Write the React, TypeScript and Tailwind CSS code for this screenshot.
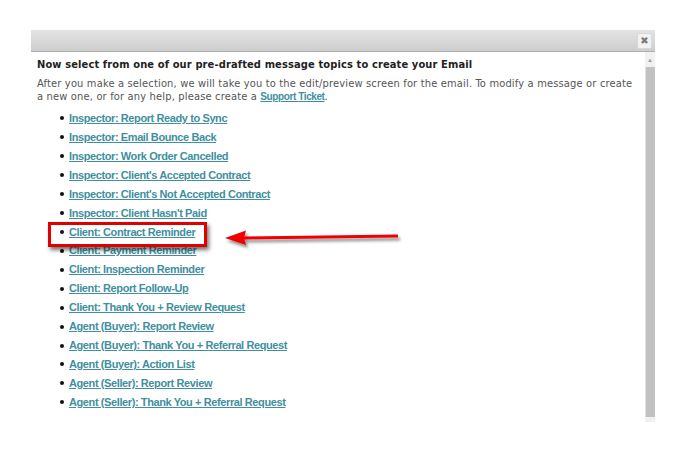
import React from "react";

const items = [
  "Inspector: Report Ready to Sync",
  "Inspector: Email Bounce Back",
  "Inspector: Work Order Cancelled",
  "Inspector: Client's Accepted Contract",
  "Inspector: Client's Not Accepted Contract",
  "Inspector: Client Hasn't Paid",
  "Client: Contract Reminder",
  "Client: Payment Reminder",
  "Client: Inspection Reminder",
  "Client: Report Follow-Up",
  "Client: Thank You + Review Request",
  "Agent (Buyer): Report Review",
  "Agent (Buyer): Thank You + Referral Request",
  "Agent (Buyer): Action List",
  "Agent (Seller): Report Review",
  "Agent (Seller): Thank You + Referral Request",
];

export default function App() {
  return (
    <div className="relative w-[684px] h-[450px] bg-white pt-[30px] pl-[31px] overflow-hidden">
      <div className="w-[624px] flex flex-col">
        <div className="h-[22px] flex items-center justify-end pr-[3px] bg-gradient-to-b from-[#e4e4e4] to-[#cdcdcd] border-b border-[#b0b0b0]">
          <div className="w-[15px] h-[16px] bg-[#f2f2f2] border border-[#d8d8d8] rounded-[2px] flex items-center justify-center text-[10px] text-[#7a7a7a] leading-none font-['DejaVu_Sans',sans-serif]">
            ✖
          </div>
        </div>
        <div className="flex h-[370px]">
          <div className="flex-1 pl-[6px] pt-[4px] font-['DejaVu_Sans_Condensed','DejaVu_Sans',sans-serif]">
            <div className="text-[11px] font-bold text-[#222] leading-[18px] tracking-[0.13px] whitespace-nowrap">
              Now select from one of our pre-drafted message topics to create your Email
            </div>
            <div className="text-[11px] text-[#555] leading-[12.5px] mt-[4px] tracking-[0.17px] whitespace-nowrap">
              After you make a selection, we will take you to the edit/preview screen for the email. To modify a message or create
              <br />
              a new one, or for any help, please create a{" "}
              <span className="font-['Liberation_Sans',sans-serif] font-bold text-[10px] underline text-[#3f8fa0] tracking-[-0.4px]">
                Support Ticket
              </span>
              .
            </div>
            <ul className="mt-[6px] pl-[23px] font-['Liberation_Sans',sans-serif] text-[11px] font-bold leading-[18.93px]">
              {items.map((t) => (
                <li key={t} className="flex items-center h-[18.93px]">
                  <span className="w-[4px] h-[4px] rounded-full bg-[#111] mr-[5px] shrink-0"></span>
                  <span className="underline text-[#3f8fa0] tracking-[-0.4px] whitespace-nowrap">{t}</span>
                </li>
              ))}
            </ul>
          </div>
          <div className="w-[10px] flex flex-col bg-[#f1f1f1]">
            <div className="h-[15px] flex items-center justify-center text-[6px] text-[#999] leading-none">▲</div>
            <div className="flex-1 bg-[#c1c1c1] border-l border-[#e0e0e0] mb-[5px]"></div>
          </div>
        </div>
      </div>

      <div className="absolute left-[48px] top-[222px] w-[159px] h-[25px] border-[3px] border-[#e00000] shadow-[2px_3px_4px_rgba(0,0,0,0.55)]"></div>
      <svg className="absolute left-[220px] top-[226px]" width="190" height="24" viewBox="0 0 190 24">
        <defs>
          <filter id="sh" x="-10%" y="-50%" width="120%" height="200%">
            <feDropShadow dx="2" dy="3" stdDeviation="1.5" floodColor="#000" floodOpacity="0.45" />
          </filter>
        </defs>
        <g filter="url(#sh)">
          <path d="M23 10.5 L178 8.5 L178 11.5 L23 13.5 Z" fill="#f00000" />
          <path d="M5 12 L26 4.5 L24 12 L26 19 Z" fill="#f00000" />
        </g>
      </svg>
    </div>
  );
}
